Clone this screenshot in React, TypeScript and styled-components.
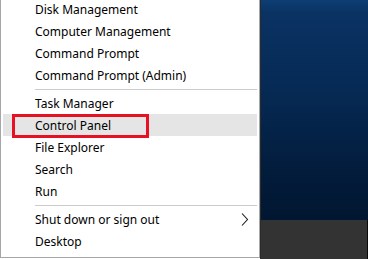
import React from 'react'
import styled, { createGlobalStyle } from 'styled-components'

const GlobalStyle = createGlobalStyle`
  html, body {
    margin: 0;
    padding: 0;
    height: 259px;
    overflow: hidden;
    background: #ffffff;
  }
`

type Item = { label: string; active?: boolean; submenu?: boolean }

const groups: Item[][] = [
  [
    { label: 'Disk Management' },
    { label: 'Computer Management' },
    { label: 'Command Prompt' },
    { label: 'Command Prompt (Admin)' },
  ],
  [
    { label: 'Task Manager' },
    { label: 'Control Panel', active: true },
    { label: 'File Explorer' },
    { label: 'Search' },
    { label: 'Run' },
  ],
  [{ label: 'Shut down or sign out', submenu: true }, { label: 'Desktop' }],
]

const Chevron = () => (
  <svg width='8' height='13' viewBox='0 0 8 13'>
    <path d='M1 0.5 L6.5 6.5 L1 12.5' fill='none' stroke='#1a1a1a' strokeWidth='1.1' />
  </svg>
)

export default function App() {
  return (
    <>
      <GlobalStyle />
      <Screen>
        <Menu>
          {groups.map((group, gi) => (
            <React.Fragment key={gi}>
              {gi > 0 && <Separator />}
              {group.map((item) => (
                <Row key={item.label} $active={item.active}>
                  <Label>{item.label}</Label>
                  {item.submenu && (
                    <Arrow>
                      <Chevron />
                    </Arrow>
                  )}
                  {item.active && <Highlight />}
                </Row>
              ))}
            </React.Fragment>
          ))}
        </Menu>
        <Desktop>
          <Wallpaper />
          <Taskbar />
        </Desktop>
      </Screen>
    </>
  )
}

const Screen = styled.div`
  display: flex;
  height: 259px;
  overflow: hidden;
  font-family: 'Segoe UI', 'Noto Sans', 'Open Sans', sans-serif;
`

const Menu = styled.div`
  flex: 0 0 260px;
  box-sizing: border-box;
  margin-top: -2px;
  height: 260px;
  padding: 0 2px 4px;
  background: #ffffff;
  border-left: 1px solid #a6a6a6;
  border-right: 1px solid #a6a6a6;
  border-bottom: 1px solid #a6a6a6;
  display: flex;
  flex-direction: column;
`

const Row = styled.div<{ $active?: boolean }>`
  position: relative;
  height: 22px;
  display: flex;
  align-items: center;
  padding-left: 32px;
  padding-right: 8px;
  background: ${(p) => (p.$active ? '#e5e5e5' : 'transparent')};
`

const Label = styled.span`
  flex: 1;
  font-size: 12px;
  color: #000000;
  white-space: nowrap;
`

const Arrow = styled.span`
  display: flex;
  align-items: center;
`

const Highlight = styled.div`
  position: absolute;
  left: 9px;
  top: 0;
  width: 137px;
  height: 24px;
  box-sizing: border-box;
  border: 3px solid #e81123;
`

const Separator = styled.div`
  height: 6px;
  margin-left: 32px;
  display: flex;
  align-items: center;
  &::after {
    content: '';
    flex: 1;
    height: 1px;
    background: #cccccc;
  }
`

const Desktop = styled.div`
  flex: 1;
  display: flex;
  flex-direction: column;
  border-left: 1px solid #2b2b2b;
`

const Wallpaper = styled.div`
  flex: 1;
  background: linear-gradient(180deg, #0d3e73 0%, #0a3263 6%, #062a55 40%, #031d3e 75%, #011630 100%);
`

const Taskbar = styled.div`
  height: 39px;
  background: #333333;
  border-right: 1px solid #0a0a0a;
`
